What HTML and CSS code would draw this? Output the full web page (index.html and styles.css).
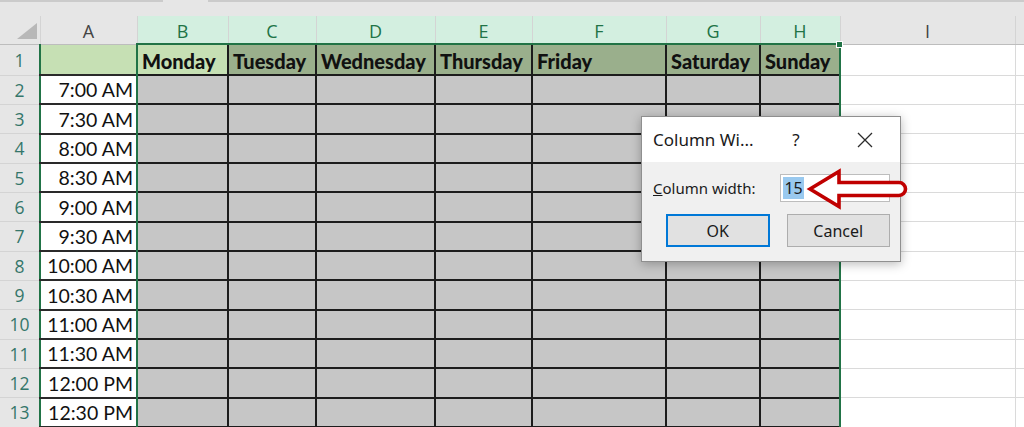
FILE: index.html
```html
<!DOCTYPE html>
<html>
<head>
<meta http-equiv="Content-Type" content="text/html; charset=utf-8"/>
<title>Weekly Schedule - Column Width</title>
<link rel="stylesheet" href="styles.css">
</head>
<body>
<div class="app">
  <div class="topbar">
    <span class="tb-seg tb-left"></span>
    <span class="tb-gap"></span>
    <span class="tb-seg tb-right"></span>
  </div>

  <table class="grid">
    <colgroup>
      <col class="w-rh"><col class="w-a"><col class="w-b"><col class="w-c"><col class="w-d">
      <col class="w-e"><col class="w-f"><col class="w-g"><col class="w-h"><col class="w-i"><col class="w-j">
    </colgroup>
    <tr class="r-head">
      <th class="corner"><svg width="20" height="16" viewBox="0 0 20 16"><polygon points="20,0 20,16 0,16" fill="#b8b8b8"/></svg></th>
      <th class="ch">A</th>
      <th class="ch sel">B</th>
      <th class="ch sel">C</th>
      <th class="ch sel">D</th>
      <th class="ch sel">E</th>
      <th class="ch sel">F</th>
      <th class="ch sel">G</th>
      <th class="ch sel">H</th>
      <th class="ch">I</th>
      <th class="ch"></th>
    </tr>
    <tr class="r-1">
      <th class="rh">1</th>
      <td class="a a1"></td>
      <td class="day active">Monday</td>
      <td class="day">Tuesday</td>
      <td class="day">Wednesday</td>
      <td class="day">Thursday</td>
      <td class="day">Friday</td>
      <td class="day">Saturday</td>
      <td class="day">Sunday</td>
      <td class="e"></td>
      <td class="e"></td>
    </tr>
    <tr class="r">
      <th class="rh">2</th><td class="a">7:00 AM</td>
      <td class="s"></td><td class="s"></td><td class="s"></td><td class="s"></td><td class="s"></td><td class="s"></td><td class="s"></td>
      <td class="e"></td><td class="e"></td>
    </tr>
    <tr class="r">
      <th class="rh">3</th><td class="a">7:30 AM</td>
      <td class="s"></td><td class="s"></td><td class="s"></td><td class="s"></td><td class="s"></td><td class="s"></td><td class="s"></td>
      <td class="e"></td><td class="e"></td>
    </tr>
    <tr class="r">
      <th class="rh">4</th><td class="a">8:00 AM</td>
      <td class="s"></td><td class="s"></td><td class="s"></td><td class="s"></td><td class="s"></td><td class="s"></td><td class="s"></td>
      <td class="e"></td><td class="e"></td>
    </tr>
    <tr class="r">
      <th class="rh">5</th><td class="a">8:30 AM</td>
      <td class="s"></td><td class="s"></td><td class="s"></td><td class="s"></td><td class="s"></td><td class="s"></td><td class="s"></td>
      <td class="e"></td><td class="e"></td>
    </tr>
    <tr class="r">
      <th class="rh">6</th><td class="a">9:00 AM</td>
      <td class="s"></td><td class="s"></td><td class="s"></td><td class="s"></td><td class="s"></td><td class="s"></td><td class="s"></td>
      <td class="e"></td><td class="e"></td>
    </tr>
    <tr class="r">
      <th class="rh">7</th><td class="a">9:30 AM</td>
      <td class="s"></td><td class="s"></td><td class="s"></td><td class="s"></td><td class="s"></td><td class="s"></td><td class="s"></td>
      <td class="e"></td><td class="e"></td>
    </tr>
    <tr class="r">
      <th class="rh">8</th><td class="a">10:00 AM</td>
      <td class="s"></td><td class="s"></td><td class="s"></td><td class="s"></td><td class="s"></td><td class="s"></td><td class="s"></td>
      <td class="e"></td><td class="e"></td>
    </tr>
    <tr class="r">
      <th class="rh">9</th><td class="a">10:30 AM</td>
      <td class="s"></td><td class="s"></td><td class="s"></td><td class="s"></td><td class="s"></td><td class="s"></td><td class="s"></td>
      <td class="e"></td><td class="e"></td>
    </tr>
    <tr class="r">
      <th class="rh">10</th><td class="a">11:00 AM</td>
      <td class="s"></td><td class="s"></td><td class="s"></td><td class="s"></td><td class="s"></td><td class="s"></td><td class="s"></td>
      <td class="e"></td><td class="e"></td>
    </tr>
    <tr class="r">
      <th class="rh">11</th><td class="a">11:30 AM</td>
      <td class="s"></td><td class="s"></td><td class="s"></td><td class="s"></td><td class="s"></td><td class="s"></td><td class="s"></td>
      <td class="e"></td><td class="e"></td>
    </tr>
    <tr class="r">
      <th class="rh">12</th><td class="a">12:00 PM</td>
      <td class="s"></td><td class="s"></td><td class="s"></td><td class="s"></td><td class="s"></td><td class="s"></td><td class="s"></td>
      <td class="e"></td><td class="e"></td>
    </tr>
    <tr class="r">
      <th class="rh">13</th><td class="a">12:30 PM</td>
      <td class="s"></td><td class="s"></td><td class="s"></td><td class="s"></td><td class="s"></td><td class="s"></td><td class="s"></td>
      <td class="e"></td><td class="e"></td>
    </tr>
  </table>

  <!-- selected range B:H -->
  <div class="selection"><span class="handle"></span></div>

  <div class="dialog">
    <div class="dlg-title">
      <span class="dlg-name">Column Wi...</span>
      <span class="dlg-help">?</span>
      <span class="dlg-close">
        <svg width="16" height="16" viewBox="0 0 16 16"><path d="M1 1 L15 15 M15 1 L1 15" stroke="#2b2b2b" stroke-width="1.3" fill="none"/></svg>
      </span>
    </div>
    <div class="dlg-body">
      <div class="dlg-row">
        <label class="dlg-label"><u>C</u>olumn width:</label>
        <div class="dlg-input"><span class="picked">15</span></div>
      </div>
      <div class="dlg-buttons">
        <button class="btn btn-ok">OK</button>
        <button class="btn">Cancel</button>
      </div>
    </div>
  </div>

  <svg class="arrow" width="110" height="46" viewBox="800 166 110 46">
    <path d="M810 189 L839 171.5 L839 182.5 L899 182.5 A6.5 6.5 0 0 1 899 195.5 L839 195.5 L839 206.5 Z"
          fill="#fff" stroke="#c00000" stroke-width="3.6" stroke-linejoin="miter"/>
  </svg>
</div>
</body>
</html>
```

FILE: styles.css
```css
html, body {
  margin: 0;
  padding: 0;
  background-color: white;
  overflow: hidden;
}

.app {
  position: relative;
  width: 1024px;
  height: 427px;
  overflow: hidden;
  font-family: "Open Sans", sans-serif;
}

/* strip under the ribbon / formula bar */
.topbar {
  display: flex;
  height: 16px;
  background-color: #e6e6e6;
}
.tb-seg {
  height: 2px;
  background-color: #cbcbcb;
}
.tb-left { width: 163px; }
.tb-gap { width: 45px; }
.tb-right { flex: 1; }

/* spreadsheet grid */
.grid {
  border-collapse: collapse;
  table-layout: fixed;
  width: 1124px;
}
.w-rh { width: 40px; }
.w-a { width: 97px; }
.w-b { width: 91px; }
.w-c { width: 88px; }
.w-d { width: 119px; }
.w-e { width: 97px; }
.w-f { width: 134px; }
.w-g { width: 94px; }
.w-h { width: 80px; }
.w-i { width: 175px; }
.w-j { width: 109px; }

.grid th, .grid td {
  padding: 0;
  overflow: hidden;
  white-space: nowrap;
}

.r-head { height: 28px; }
.r-1 { height: 31px; }
.r { height: 29.35px; }

.corner {
  background-color: #e6e6e6;
  border-right: 1px solid #d4d4d4;
  border-bottom: 1px solid #bdbdbd;
  text-align: right;
  vertical-align: bottom;
}
.corner svg {
  display: block;
  margin: 0 3px 5px auto;
}

.ch {
  background-color: #e6e6e6;
  color: #444;
  font-weight: normal;
  font-size: 18px;
  padding-top: 2px !important;
  border-right: 1px solid #d4d4d4;
  border-bottom: 1px solid #bdbdbd;
  text-align: center;
  vertical-align: middle;
}
.ch.sel {
  background-color: #d3efe0;
  color: #217346;
  border-bottom: 2px solid #217346;
}

.rh {
  background-color: #e6e6e6;
  color: #35766a;
  font-weight: normal;
  font-size: 17.5px;
  text-align: center;
  border-bottom: 1px solid #d4d4d4;
  border-right: 1px solid #c4c4c4;
}

.a {
  background-color: white;
  border-left: 2px solid #217346;
  border-bottom: 2px solid #2a2a2a;
  font-family: "Lato", sans-serif;
  font-size: 19.5px;
  color: #111;
  text-align: right;
  padding-right: 3px !important;
}
.a1 {
  background-color: #c6e0b4;
}

.day {
  background-color: #9aaf8c;
  border: 2px solid #1c1c1c;
  font-family: "Lato", sans-serif;
  font-weight: 900;
  font-size: 20px;
  color: #111;
  padding-left: 4px !important;
  padding-top: 2px !important;
}
.day.active {
  background-color: #c6e0b4;
}

.s {
  background-color: #c6c6c6;
  border: 2px solid #1c1c1c;
}

.e {
  background-color: white;
  border-right: 1px solid #dadada;
  border-bottom: 1px solid #dadada;
}

.selection {
  position: absolute;
  left: 136px;
  top: 43px;
  width: 705px;
  height: 400px;
  box-sizing: border-box;
  border: 2px solid #217346;
}
.handle {
  position: absolute;
  right: -4px;
  top: -4px;
  width: 5px;
  height: 5px;
  background-color: #217346;
  border: 1px solid white;
}

/* Column Width dialog */
.dialog {
  position: absolute;
  left: 641px;
  top: 116px;
  width: 260px;
  height: 146px;
  box-sizing: border-box;
  border: 1px solid #8f8f8f;
  background-color: #f0f0f0;
  box-shadow: 0 2px 10px rgba(0, 0, 0, 0.28);
  font-family: "Noto Sans", "Open Sans", sans-serif;
  color: #1a1a1a;
}

.dlg-title {
  display: flex;
  align-items: center;
  height: 45px;
  background-color: white;
  padding-left: 11px;
}
.dlg-name {
  flex: 1;
  font-size: 17px;
}
.dlg-help {
  width: 30px;
  text-align: center;
  font-size: 17px;
  margin-right: 34px;
}
.dlg-close {
  width: 40px;
  display: flex;
  justify-content: center;
  margin-right: 15px;
}

.dlg-body {
  padding: 12px 10px 0 11px;
}
.dlg-row {
  display: flex;
  align-items: center;
  height: 28px;
}
.dlg-label {
  width: 128px;
  font-size: 15px;
}
.dlg-input {
  width: 110px;
  height: 28px;
  box-sizing: border-box;
  border: 1px solid #bdbdbd;
  background-color: white;
  display: flex;
  align-items: center;
  padding-left: 2px;
}
.picked {
  background-color: #99c9ef;
  font-size: 16px;
  line-height: 22px;
  padding: 0 1px;
}

.dlg-buttons {
  display: flex;
  gap: 17px;
  margin-top: 12px;
  padding-left: 13px;
}
.btn {
  width: 104px;
  height: 33px;
  box-sizing: border-box;
  background-color: #e1e1e1;
  border: 1px solid #adadad;
  font-family: "Noto Sans", "Open Sans", sans-serif;
  font-size: 16px;
  color: #1a1a1a;
  padding: 0;
}
.btn-ok {
  border: 2px solid #0078d7;
}

.arrow {
  position: absolute;
  left: 800px;
  top: 166px;
}
```
